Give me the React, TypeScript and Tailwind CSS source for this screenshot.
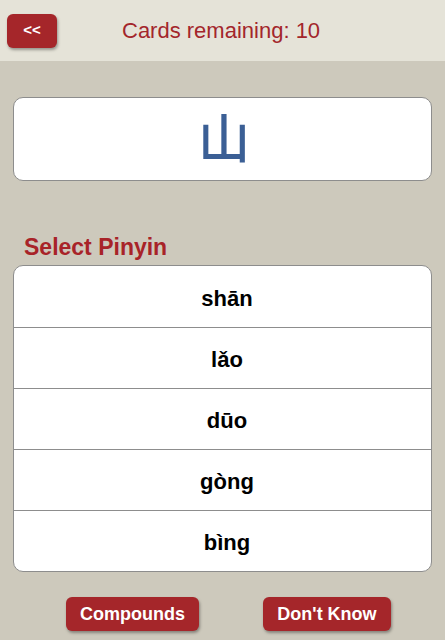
import React from "react";

const options = ["shān", "lǎo", "dūo", "gòng", "bìng"];

export default function App() {
  return (
    <div
      className="flex h-[640px] w-[445px] flex-col overflow-hidden bg-[#cdc9bc]"
      style={{ fontFamily: '"Liberation Sans", Arial, "Noto Sans CJK SC", sans-serif' }}
    >
      {/* Top bar */}
      <div className="flex h-[61px] items-center bg-[#e5e3d8] pl-[7px]">
        <button className="flex h-[34px] w-[50px] items-center justify-center rounded-[6px] bg-[#a5262a] text-[15px] font-bold text-white shadow-[1px_2px_3px_rgba(0,0,0,0.35)]">
          &lt;&lt;
        </button>
        <div className="ml-[65px] text-[22px] text-[#a3262b]">Cards remaining: 10</div>
      </div>

      {/* Character card */}
      <div className="mx-[13px] mt-[36px] flex h-[84px] items-center justify-center rounded-[10px] border border-[#8d8d8d] bg-white pb-[6px] pl-[3px]">
        <span
          className="text-[52px] leading-none text-[#3b5f95]"
          style={{ fontFamily: '"Noto Sans CJK SC", sans-serif', fontWeight: 500 }}
        >
          山
        </span>
      </div>

      <div className="ml-[24px] mt-[54px] text-[23px] font-bold leading-[24px] text-[#a82328]">Select Pinyin</div>

      {/* Options */}
      <div className="mx-[13px] mt-[6px] flex flex-col overflow-hidden rounded-[10px] border border-[#8d8d8d] bg-white">
        {options.map((o, i) => (
          <div
            key={o}
            className={`flex h-[61px] items-center justify-center pl-[9px] pt-[3px] text-[22px] font-bold text-black ${
              i > 0 ? "border-t border-[#8d8d8d]" : ""
            }`}
          >
            {o}
          </div>
        ))}
      </div>

      {/* Bottom buttons */}
      <div className="mt-[25px] flex">
        <button className="ml-[66px] flex h-[34px] w-[133px] items-center justify-center rounded-[6px] bg-[#a5262a] text-[18px] font-bold text-white shadow-[1px_2px_3px_rgba(0,0,0,0.35)]">
          Compounds
        </button>
        <button className="ml-[64px] flex h-[34px] w-[128px] items-center justify-center rounded-[6px] bg-[#a5262a] text-[18px] font-bold text-white shadow-[1px_2px_3px_rgba(0,0,0,0.35)]">
          Don't Know
        </button>
      </div>
    </div>
  );
}
